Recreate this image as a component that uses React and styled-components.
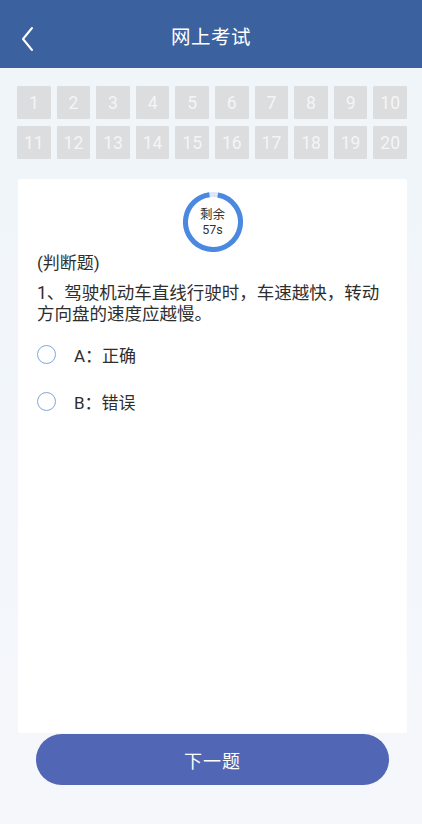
import React from "react";
import styled, { createGlobalStyle } from "styled-components";

const GlobalStyle = createGlobalStyle`
  html, body {
    margin: 0;
    padding: 0;
    background: #f2f6fa;
    font-family: Roboto, "Noto Sans CJK SC", sans-serif;
  }
`;

const Page = styled.div`
  width: 422px;
  min-height: 824px;
  display: flex;
  flex-direction: column;
  background: linear-gradient(180deg, #eff5f9 0%, #f5f7fb 100%);
`;

const Header = styled.div`
  height: 68px;
  background: #3b619f;
  display: flex;
  align-items: center;
  justify-content: center;
  position: relative;
  flex-shrink: 0;
`;

const BackBtn = styled.div`
  position: absolute;
  left: 19px;
  top: 26px;
  width: 18px;
  height: 26px;
`;

const Title = styled.div`
  color: #fff;
  font-size: 19.5px;
  letter-spacing: 0.5px;
  padding-top: 3px;
`;

const NumGrid = styled.div`
  display: grid;
  grid-template-columns: repeat(10, 1fr);
  gap: 7px 6px;
  padding: 18px 15px 0 17px;
`;

const NumCell = styled.div`
  height: 33px;
  background: #dcdddf;
  color: #f5f5f5;
  font-size: 17.5px;
  display: flex;
  align-items: center;
  justify-content: center;
  border-radius: 1px;
`;

const Card = styled.div`
  margin: 20px 15px 0 18px;
  height: 554px;
  background: #fff;
  padding: 13px 19px 0;
  box-sizing: border-box;
  color: #2e2e2e;
  border-radius: 2px;
`;

const Timer = styled.div`
  width: 60px;
  height: 60px;
  margin: 0 auto;
  position: relative;
  display: flex;
  flex-direction: column;
  align-items: center;
  justify-content: center;
  font-size: 12.5px;
  line-height: 15px;
  color: #333;
  svg {
    position: absolute;
    left: 0;
    top: 0;
  }
`;

const TypeLabel = styled.div`
  margin-top: 1px;
  font-size: 17px;
  line-height: 21px;
`;

const Question = styled.div`
  margin-top: 9px;
  font-size: 17.5px;
  line-height: 21px;
`;

const Options = styled.div`
  margin-top: 19px;
  display: flex;
  flex-direction: column;
  gap: 26px;
`;

const Option = styled.div`
  display: flex;
  align-items: center;
  height: 21px;
  font-size: 17px;
`;

const Radio = styled.span`
  width: 17px;
  height: 17px;
  border: 1.6px solid #7ea6dc;
  border-radius: 50%;
  margin-right: 18px;
  flex-shrink: 0;
`;

const Footer = styled.div`
  padding: 1px 33px 40px 36px;
`;

const NextBtn = styled.button`
  width: 100%;
  height: 51px;
  border: none;
  border-radius: 26px;
  background: #5266b6;
  color: #fff;
  font-size: 18px;
  font-family: inherit;
  letter-spacing: 1px;
`;

const total = 60;
const left = 57;
const r = 27.5;
const circ = 2 * Math.PI * r;

export default function App() {
  const nums = [...Array(20).keys()].map((i) => i + 1);
  return (
    <Page>
      <GlobalStyle />
      <Header>
        <BackBtn>
          <svg width="18" height="26" viewBox="0 0 18 26">
            <polyline points="13,2 4,13 13,24" fill="none" stroke="#fff" strokeWidth="2" strokeLinecap="round" strokeLinejoin="round" />
          </svg>
        </BackBtn>
        <Title>网上考试</Title>
      </Header>
      <NumGrid>
        {nums.map((n) => (
          <NumCell key={n}>{n}</NumCell>
        ))}
      </NumGrid>
      <Card>
        <Timer>
          <svg width="60" height="60" viewBox="0 0 60 60">
            <circle cx="30" cy="30" r={r} fill="none" stroke="#dbe7f7" strokeWidth="5" />
            <circle
              cx="30"
              cy="30"
              r={r}
              fill="none"
              stroke="#4b89e0"
              strokeWidth="5"
              strokeDasharray={`${(circ * left) / total} ${circ}`}
              transform="rotate(-80 30 30)"
            />
          </svg>
          <span>剩余</span>
          <span>57s</span>
        </Timer>
        <TypeLabel>(判断题)</TypeLabel>
        <Question>1、驾驶机动车直线行驶时，车速越快，转动方向盘的速度应越慢。</Question>
        <Options>
          <Option>
            <Radio />
            A：正确
          </Option>
          <Option>
            <Radio />
            B：错误
          </Option>
        </Options>
      </Card>
      <Footer>
        <NextBtn>下一题</NextBtn>
      </Footer>
    </Page>
  );
}
